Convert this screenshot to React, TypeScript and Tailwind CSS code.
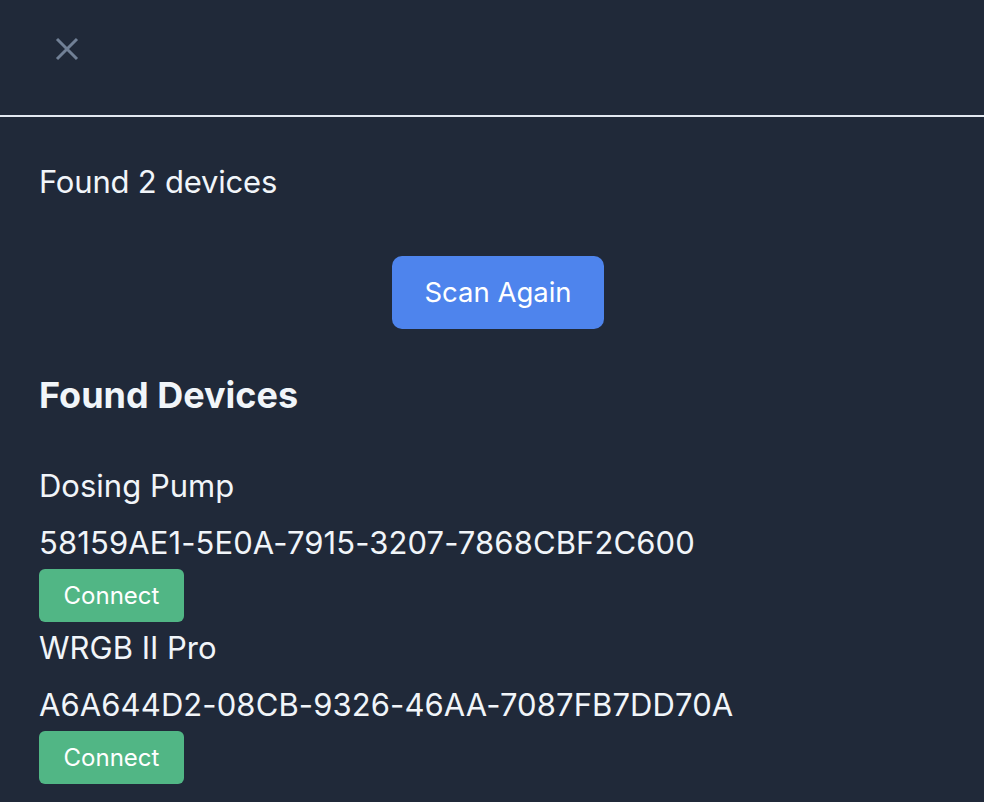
import React from "react";

const devices = [
  { name: "Dosing Pump", id: "58159AE1-5E0A-7915-3207-7868CBF2C600" },
  { name: "WRGB II Pro", id: "A6A644D2-08CB-9326-46AA-7087FB7DD70A" },
];

export default function App() {
  return (
    <div className="min-h-[802px] w-full bg-[#202939] text-[#f1f5f9]" style={{ fontFamily: "Inter, 'Noto Sans', sans-serif" }}>
      <div className="h-[117px] border-b-2 border-[#e2e8f0] flex items-start">
        <button className="ml-[55px] mt-[37px] w-[24px] h-[24px] flex items-center justify-center text-[#718096]">
          <svg width="24" height="24" viewBox="0 0 24 24" fill="none" stroke="currentColor" strokeWidth="3">
            <path d="M2 2L22 22M22 2L2 22" />
          </svg>
        </button>
      </div>
      <div className="pl-[39px] pr-[27px]">
        <p className="mt-[45px] text-[31px] leading-[40px] tracking-[-0.2px]">Found 2 devices</p>
        <div className="flex justify-center mt-[54px]">
          <button className="w-[212px] h-[73px] rounded-[10px] bg-[#4e84ed] text-white text-[27.5px]">Scan Again</button>
        </div>
        <h2 className="mt-[44px] text-[36px] leading-[44px] font-bold">Found Devices</h2>
        <div className="mt-[49px] flex flex-col gap-[6px]">
          {devices.map((d) => (
            <div key={d.id} className="flex flex-col">
              <p className="text-[31px] leading-[40px]">{d.name}</p>
              <p className="mt-[17px] text-[31px] leading-[40px] tracking-[0.1px]">{d.id}</p>
              <button className="mt-[6px] w-[145px] h-[53px] rounded-[6px] bg-[#51b685] text-white text-[24px]">Connect</button>
            </div>
          ))}
        </div>
      </div>
    </div>
  );
}
